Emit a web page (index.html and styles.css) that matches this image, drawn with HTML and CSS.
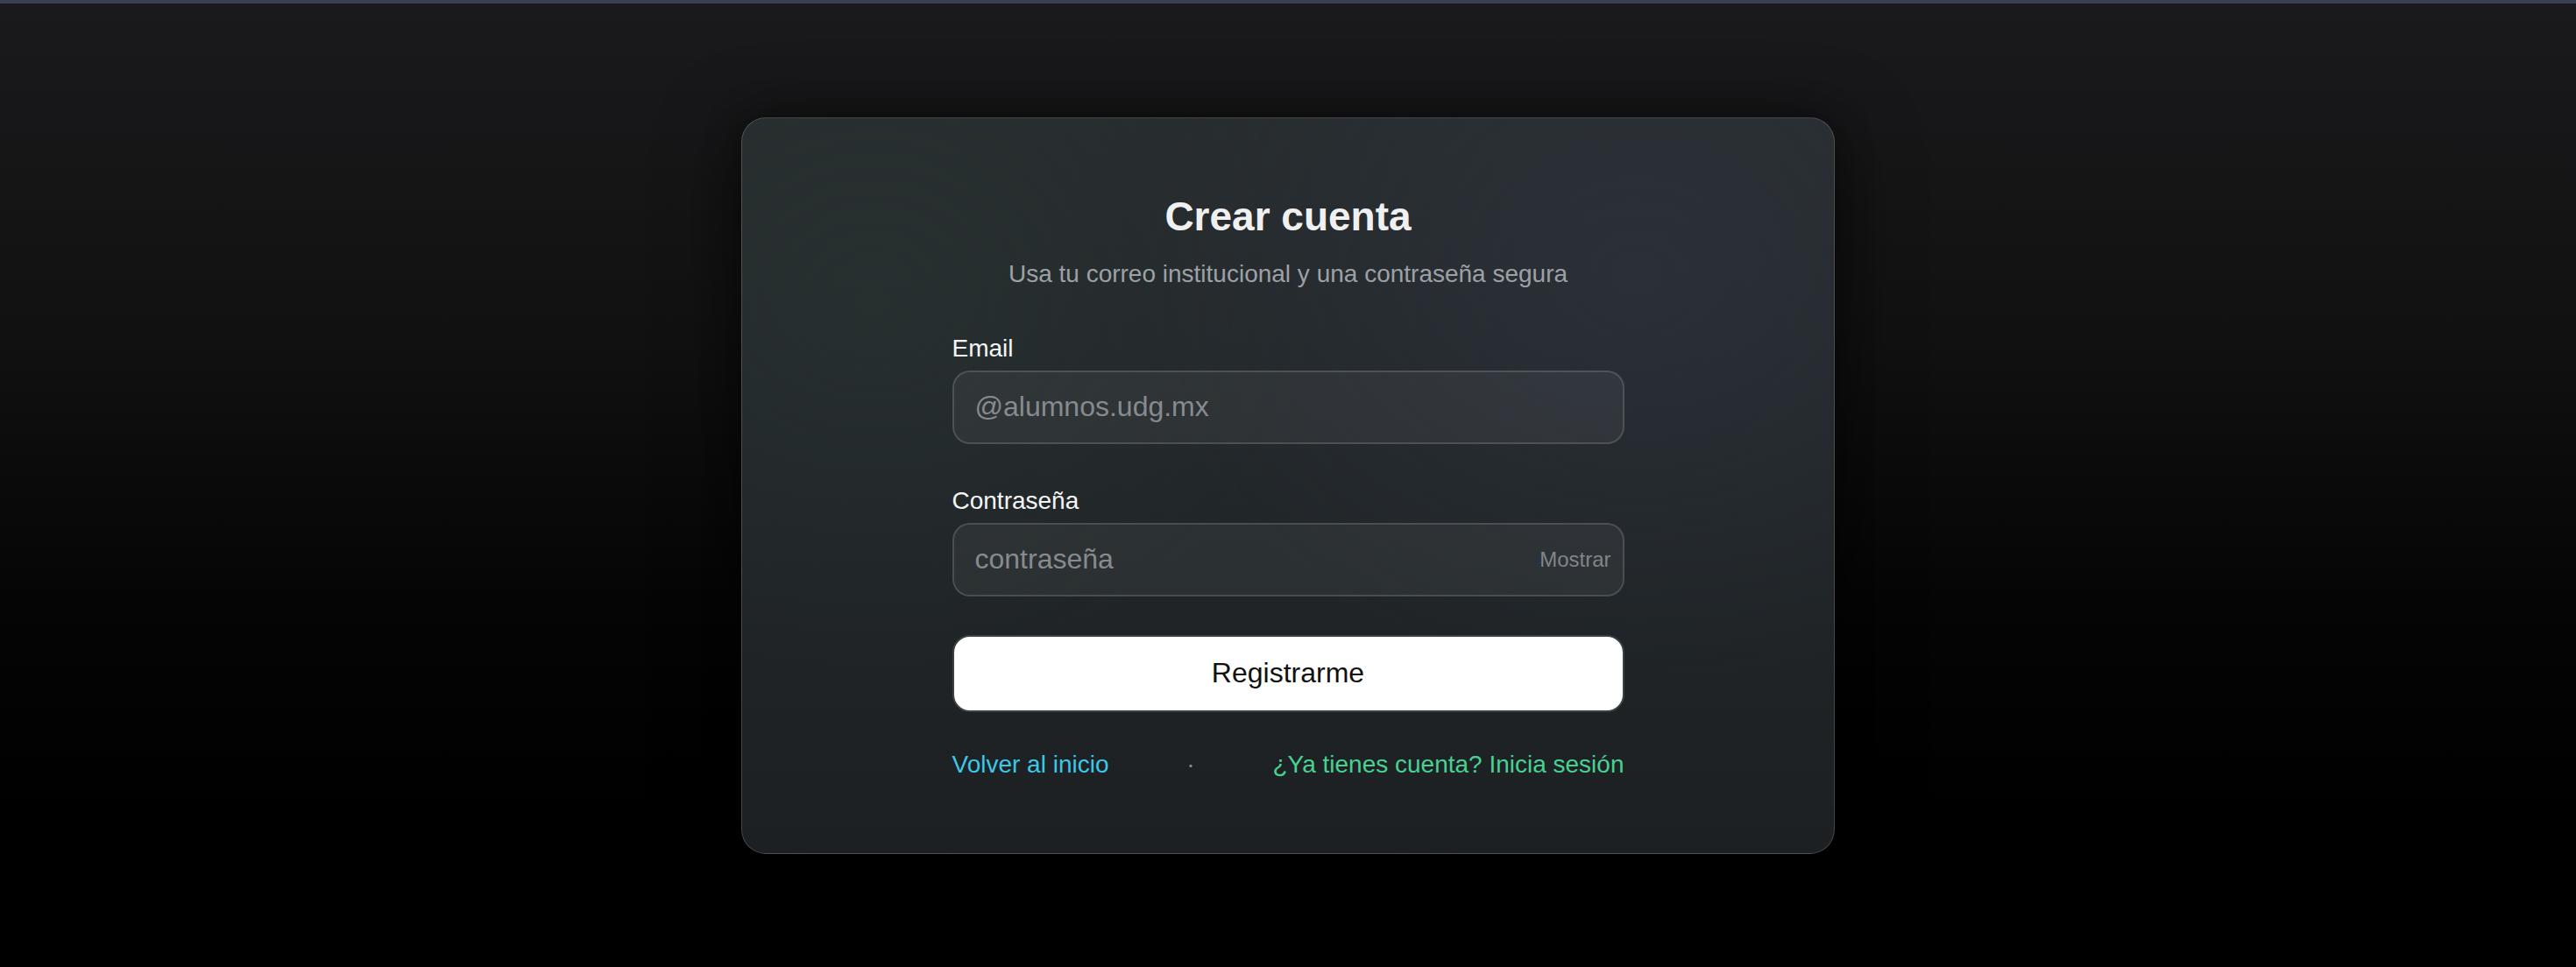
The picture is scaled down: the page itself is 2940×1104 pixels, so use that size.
FILE: index.html
```html
<!DOCTYPE html>
<html lang="es">
<head>
<meta charset="utf-8">
<title>Crear cuenta</title>
<link rel="stylesheet" href="styles.css">
</head>
<body>
<div class="topbar"></div>
<main class="page">
  <section class="card">
    <form class="form">
      <h1 class="title">Crear cuenta</h1>
      <p class="subtitle">Usa tu correo institucional y una contraseña segura</p>
      <div class="field">
        <label class="label" for="email">Email</label>
        <div class="input-wrap">
          <input class="input" id="email" type="email" placeholder="@alumnos.udg.mx">
        </div>
      </div>
      <div class="field field-pass">
        <label class="label" for="pass">Contraseña</label>
        <div class="input-wrap">
          <input class="input" id="pass" type="password" placeholder="contraseña">
          <span class="toggle">Mostrar</span>
        </div>
      </div>
      <button class="btn" type="button">Registrarme</button>
      <div class="links">
        <a class="link link-back" href="#">Volver al inicio</a>
        <span class="dot">·</span>
        <a class="link link-login" href="#">¿Ya tienes cuenta? Inicia sesión</a>
      </div>
    </form>
  </section>
</main>
</body>
</html>
```
FILE: styles.css
```css
* { box-sizing: border-box; }

html, body {
  margin: 0;
  padding: 0;
  height: 100%;
}

body {
  font-family: "Liberation Sans", Arial, Helvetica, sans-serif;
  background: linear-gradient(180deg, #1a1a1c 0%, #111112 35%, #050505 62%, #000000 85%);
  color: #f2f2f2;
  display: flex;
  flex-direction: column;
  min-height: 100vh;
}

.topbar {
  height: 4px;
  background: #3a4052;
  flex: none;
}

.page {
  flex: 1;
  display: flex;
  align-items: center;
  justify-content: center;
}

.card {
  width: 1248px;
  border: 1px solid rgba(255, 255, 255, 0.17);
  border-radius: 28px;
  padding: 84px 0 84px;
  background:
    radial-gradient(ellipse 45% 55% at 82% 22%, rgba(52, 58, 74, 0.38), rgba(52, 58, 74, 0) 100%),
    radial-gradient(ellipse 40% 50% at 12% 25%, rgba(44, 58, 54, 0.35), rgba(44, 58, 54, 0) 100%),
    linear-gradient(180deg, #272c2e 0%, #22272a 45%, #1c2022 100%);
  box-shadow: 0 20px 90px rgba(0, 0, 0, 0.55), 0 0 40px rgba(0, 0, 0, 0.35);
}

.form {
  width: 767px;
  margin: 0 auto;
  display: flex;
  flex-direction: column;
}

.title {
  margin: 0;
  font-size: 46px;
  line-height: 56px;
  font-weight: 700;
  text-align: center;
  color: #f0f0f0;
}

.subtitle {
  margin: 21px 0 0;
  font-size: 28px;
  line-height: 34px;
  text-align: center;
  color: #9da1a6;
}

.field {
  margin-top: 51px;
  display: flex;
  flex-direction: column;
}

.field-pass {
  margin-top: 48px;
}

.label {
  font-size: 28px;
  line-height: 34px;
  color: #f5f5f5;
  margin-bottom: 8px;
}

.input-wrap {
  position: relative;
}

.input {
  display: block;
  width: 100%;
  height: 84px;
  padding: 0 24px;
  border: 2px solid rgba(255, 255, 255, 0.14);
  border-radius: 20px;
  background: rgba(255, 255, 255, 0.05);
  font-family: inherit;
  font-size: 32px;
  color: #f0f0f0;
  outline: none;
}

.input::placeholder {
  color: #878b8f;
  opacity: 1;
}

.toggle {
  position: absolute;
  right: 15px;
  top: 50%;
  transform: translateY(-50%);
  font-size: 24px;
  color: #80858b;
}

.btn {
  margin-top: 44px;
  height: 88px;
  width: 100%;
  border: 2px solid #3b4043;
  border-radius: 20px;
  background: #ffffff;
  color: #111111;
  font-family: inherit;
  font-size: 32px;
  cursor: pointer;
}

.links {
  margin-top: 43px;
  display: flex;
  justify-content: space-between;
  align-items: baseline;
  font-size: 28px;
  line-height: 34px;
}

.link {
  text-decoration: none;
}

.link-back {
  color: #3ec7e6;
}

.link-login {
  color: #48d193;
}

.dot {
  color: #8a8a8a;
}
```
